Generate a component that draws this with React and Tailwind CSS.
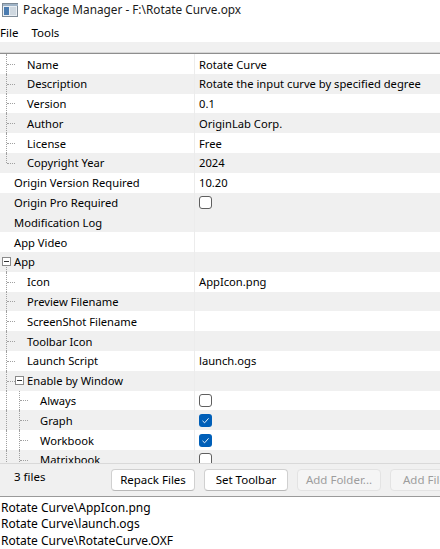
import React from 'react';

const FONT = { fontFamily: '"Noto Sans", "Open Sans", sans-serif' };

// level: 0 = top, 1 = child, 2 = grandchild
const rows = [
  { label: 'Name', value: 'Rotate Curve', level: 1 },
  { label: 'Description', value: 'Rotate the input curve by specified degree', level: 1, gray: true },
  { label: 'Version', value: '0.1', level: 1 },
  { label: 'Author', value: 'OriginLab Corp.', level: 1, gray: true },
  { label: 'License', value: 'Free', level: 1 },
  { label: 'Copyright Year', value: '2024', level: 1, last: true, gray: true },
  { label: 'Origin Version Required', value: '10.20', level: 0 },
  { label: 'Origin Pro Required', check: false, level: 0, gray: true },
  { label: 'Modification Log', level: 0, gray: true },
  { label: 'App Video', level: 0 },
  { label: 'App', level: 0, expander: true, gray: true },
  { label: 'Icon', value: 'AppIcon.png', level: 1 },
  { label: 'Preview Filename', level: 1, gray: true },
  { label: 'ScreenShot Filename', level: 1 },
  { label: 'Toolbar Icon', level: 1, gray: true },
  { label: 'Launch Script', value: 'launch.ogs', level: 1 },
  { label: 'Enable by Window', level: 1, expander: true, gray: true },
  { label: 'Always', check: false, level: 2 },
  { label: 'Graph', check: true, level: 2, gray: true },
  { label: 'Workbook', check: true, level: 2 },
  { label: 'Matrixbook', check: false, level: 2, gray: true },
];

function Expander() {
  return (
    <span className="w-[9px] h-[9px] border border-[#8a8a8a] bg-white flex items-center justify-center">
      <span className="w-[5px] h-px bg-[#333]"></span>
    </span>
  );
}

function CheckBox({ checked }) {
  if (checked) {
    return (
      <span className="w-[13px] h-[13px] rounded-[3px] bg-[#005fb8] flex items-center justify-center">
        <svg width="9" height="9" viewBox="0 0 9 9" fill="none">
          <path d="M1.5 4.8 L3.6 6.8 L7.6 2.3" stroke="#fff" strokeWidth="0.9" />
        </svg>
      </span>
    );
  }
  return <span className="w-[13px] h-[13px] rounded-[3px] border border-[#5f5f5f] bg-white"></span>;
}

function TreeCell({ row }) {
  // dotted guide lines of the tree
  const vdot = 'absolute border-l border-dotted border-[#a0a0a0]';
  const hdot = 'absolute border-t border-dotted border-[#a0a0a0] top-1/2';
  const labelLeft = row.level === 0 ? 'pl-[14px]' : row.level === 1 ? 'pl-[27px]' : 'pl-[40px]';
  return (
    <div className={`relative w-[194px] shrink-0 h-full flex items-center ${labelLeft}`}>
      {row.level === 1 && (
        <>
          <span className={`${vdot} left-[6px] top-0 ${row.last ? 'h-1/2' : 'h-full'}`}></span>
          <span className={`${hdot} left-[7px] w-[8px]`}></span>
          {row.expander && (
            <span className="absolute left-[15px] top-[5px]"><Expander /></span>
          )}
        </>
      )}
      {row.level === 2 && (
        <>
          <span className={`${vdot} left-[6px] top-0 h-full`}></span>
          <span className={`${vdot} left-[19px] top-0 h-full`}></span>
          <span className={`${hdot} left-[20px] w-[8px]`}></span>
        </>
      )}
      {row.level === 0 && row.expander && (
        <>
          <span className="absolute left-[2px] top-[5px]"><Expander /></span>
          <span className={`${vdot} left-[6px] top-[15px] h-[5px]`}></span>
        </>
      )}
      <span className="whitespace-nowrap pt-[2px]">{row.label}</span>
    </div>
  );
}

export default function App() {
  return (
    <div className="w-[440px] h-[549px] bg-white overflow-hidden text-[11.2px] text-black flex flex-col" style={FONT}>
      {/* TITLE BAR */}
      <div className="h-[24px] flex items-center gap-[5px] pl-[2px] pb-[4px] shrink-0">
        <svg width="16" height="14" viewBox="0 0 16 14">
          <rect x="0.5" y="0.5" width="15" height="13" fill="#e9eef3" stroke="#7d8a96" />
          <rect x="1" y="1" width="15" height="2" fill="#9fb3c6" />
          <rect x="2" y="4" width="5" height="8" fill="#4a7bb0" />
          <rect x="8" y="4" width="6" height="8" fill="#cfd8e0" />
        </svg>
        <span className="text-[11.8px] text-[#1b1b1b] whitespace-nowrap">Package Manager - F:\Rotate Curve.opx</span>
      </div>

      {/* MENU */}
      <div className="h-[18px] flex items-center gap-[13px] text-[11.5px] shrink-0">
        <span>File</span>
        <span>Tools</span>
      </div>
      <div className="h-[10px] bg-[#f0f0f0] shrink-0"></div>
      <div className="h-px bg-[#d6d6d6] shrink-0"></div>
      <div className="h-px bg-[#8e8e8e] shrink-0"></div>

      {/* PROPERTY GRID */}
      <div className="h-[409px] overflow-hidden shrink-0">
        {rows.map((row) => (
          <div key={row.label} className={`h-[19.8px] flex items-center ${row.gray ? 'bg-[#f0f0f0]' : 'bg-white'}`}>
            <TreeCell row={row} />
            <div className="w-px h-full bg-[#ececec]"></div>
            <div className={`flex-1 h-full flex items-center pl-[4px] whitespace-nowrap ${row.check !== undefined ? '' : 'pt-[2px]'}`}>
              {row.check !== undefined ? <CheckBox checked={row.check} /> : row.value}
            </div>
          </div>
        ))}
      </div>

      {/* BOTTOM PANEL */}
      <div className="h-px bg-[#d9d9d9] shrink-0"></div>
      <div className="h-[32px] bg-[#f0f0f0] flex items-center shrink-0 overflow-hidden">
        <span className="w-[111px] pl-[14px] shrink-0 -mt-[6px] text-[11.5px]">3 files</span>
        <div className="flex gap-[9px] shrink-0 text-[11.5px]">
          <button className="w-[84px] h-[22px] bg-white border border-[#d0d0d0] border-b-[#b8b8b8] rounded-[4px]">Repack Files</button>
          <button className="w-[84px] h-[22px] bg-white border border-[#d0d0d0] border-b-[#b8b8b8] rounded-[4px]">Set Toolbar</button>
          <button className="w-[84px] h-[22px] bg-[#f5f5f5] border border-[#e3e3e3] rounded-[4px] text-[#9d9d9d]">Add Folder...</button>
          <button className="w-[84px] h-[22px] bg-[#f5f5f5] border border-[#e3e3e3] rounded-[4px] text-[#9d9d9d] text-left pl-[12px] whitespace-nowrap">Add Files...</button>
        </div>
      </div>
      <div className="h-px bg-[#9a9a9a] shrink-0"></div>

      {/* FILE LIST */}
      <div className="flex-1 pt-[3px] leading-[16px] text-[12px]">
        <div className="pl-[1px]">Rotate Curve\AppIcon.png</div>
        <div className="pl-[1px]">Rotate Curve\launch.ogs</div>
        <div className="pl-[1px] mt-[1px]">Rotate Curve\RotateCurve.OXF</div>
      </div>
    </div>
  );
}
